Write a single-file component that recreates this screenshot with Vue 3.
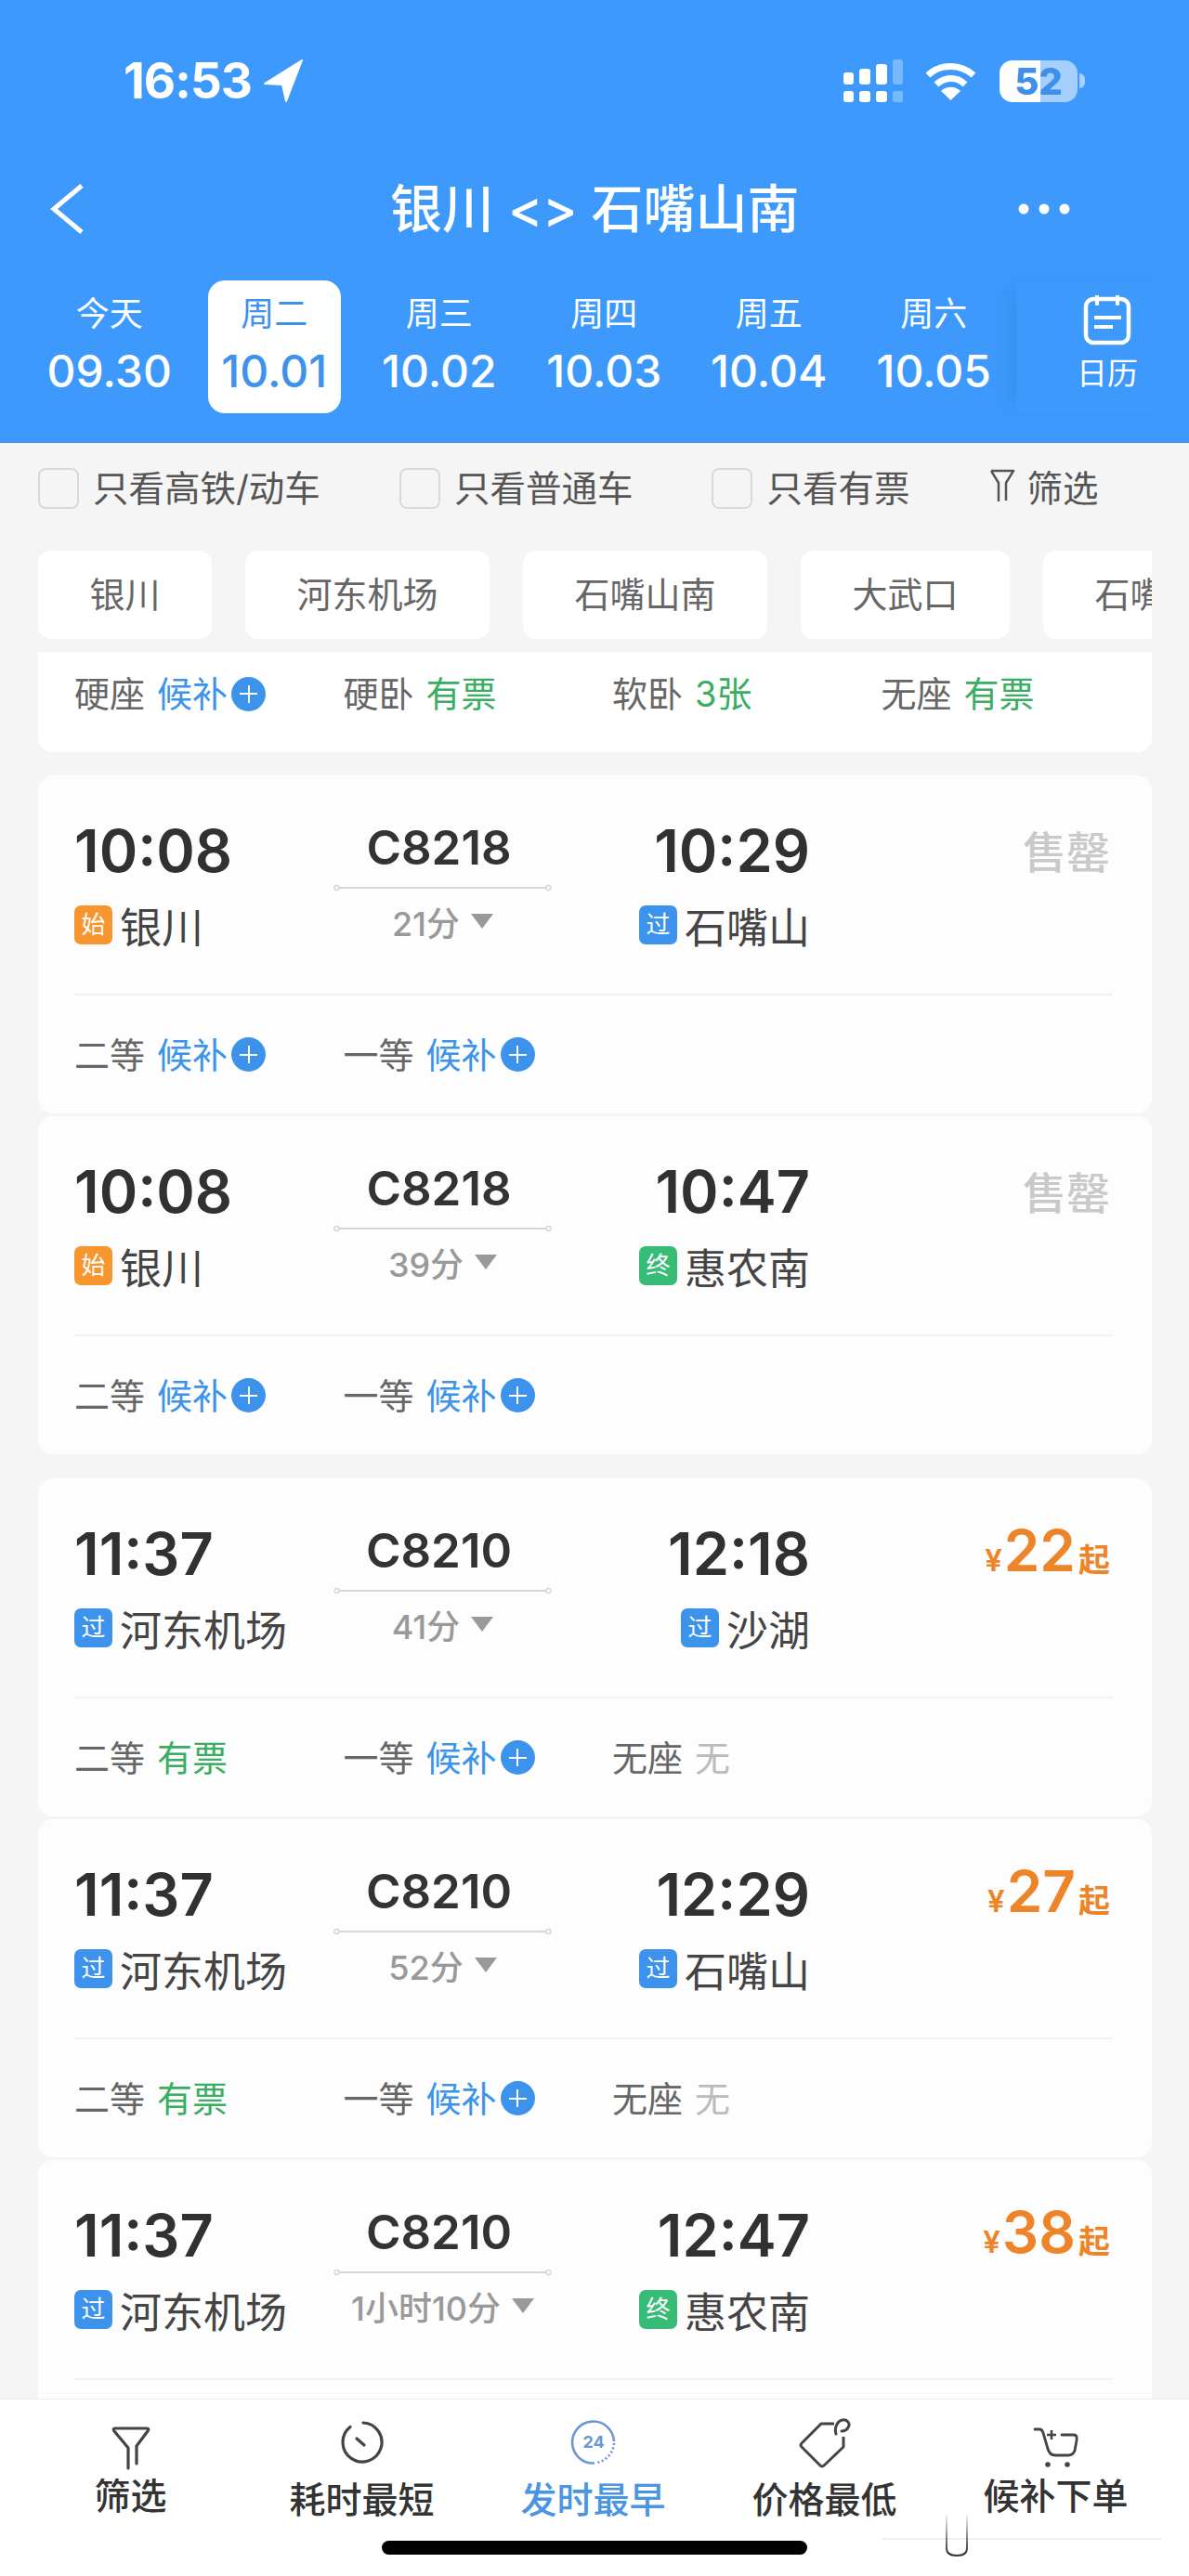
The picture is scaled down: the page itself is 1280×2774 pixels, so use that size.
<script setup>
const dates = [
  { week: '今天', date: '09.30' },
  { week: '周二', date: '10.01', active: true },
  { week: '周三', date: '10.02' },
  { week: '周四', date: '10.03' },
  { week: '周五', date: '10.04' },
  { week: '周六', date: '10.05' },
]

const stations = ['银川', '河东机场', '石嘴山南', '大武口', '石嘴山']

const filters = ['只看高铁/动车', '只看普通车', '只看有票']

const partialSeats = [
  { name: '硬座', state: '候补', type: 'wait' },
  { name: '硬卧', state: '有票', type: 'ok' },
  { name: '软卧', state: '3张', type: 'ok' },
  { name: '无座', state: '有票', type: 'ok' },
]

const seats8218 = [
  { name: '二等', state: '候补', type: 'wait' },
  { name: '一等', state: '候补', type: 'wait' },
]

const seats8210 = [
  { name: '二等', state: '有票', type: 'ok' },
  { name: '一等', state: '候补', type: 'wait' },
  { name: '无座', state: '无', type: 'none' },
]

// the last card runs under the bottom bar, its seat row is never visible
const groups = [
  [
    { from: '10:08', to: '10:29', no: 'C8218', dur: '21分', fromTag: '始', fromTagType: 'start', fromName: '银川', toTag: '过', toTagType: 'pass', toName: '石嘴山', seats: seats8218 },
    { from: '10:08', to: '10:47', no: 'C8218', dur: '39分', fromTag: '始', fromTagType: 'start', fromName: '银川', toTag: '终', toTagType: 'end', toName: '惠农南', seats: seats8218 },
  ],
  [
    { from: '11:37', to: '12:18', no: 'C8210', dur: '41分', fromTag: '过', fromTagType: 'pass', fromName: '河东机场', toTag: '过', toTagType: 'pass', toName: '沙湖', price: '22', seats: seats8210 },
    { from: '11:37', to: '12:29', no: 'C8210', dur: '52分', fromTag: '过', fromTagType: 'pass', fromName: '河东机场', toTag: '过', toTagType: 'pass', toName: '石嘴山', price: '27', seats: seats8210 },
    { from: '11:37', to: '12:47', no: 'C8210', dur: '1小时10分', fromTag: '过', fromTagType: 'pass', fromName: '河东机场', toTag: '终', toTagType: 'end', toName: '惠农南', price: '38', seats: [] },
  ],
]

const sorts = [
  { label: '筛选', icon: 'filter', high: true },
  { label: '耗时最短', icon: 'clock' },
  { label: '发时最早', icon: 'early', active: true },
  { label: '价格最低', icon: 'tag' },
  { label: '候补下单', icon: 'cart', high: true },
]
</script>

<template>
  <div class="page">
    <header class="head">
      <div class="status">
        <div class="clock">
          <span>16:53</span>
          <svg class="arrow" width="46" height="48" viewBox="0 0 46 48">
            <path d="M43 2 3 27l19 1 4 18z" fill="#fff" stroke="#fff" stroke-width="2" stroke-linejoin="round" />
          </svg>
        </div>
        <div class="status-right">
          <svg width="66" height="46" viewBox="0 0 66 46">
            <g fill="#fff">
              <rect x="0" y="14" width="11" height="13" rx="3" />
              <rect x="17" y="10" width="12" height="17" rx="3" />
              <rect x="35" y="5" width="12" height="22" rx="3" />
              <rect x="0" y="34" width="11" height="12" rx="3" />
              <rect x="17" y="34" width="12" height="12" rx="3" />
              <rect x="35" y="34" width="12" height="12" rx="3" />
            </g>
            <g fill="#fff" opacity="0.3">
              <rect x="53" y="0" width="11" height="27" rx="3" />
              <rect x="53" y="34" width="11" height="12" rx="2" />
            </g>
          </svg>
          <svg class="wifi" width="57" height="43" viewBox="0 0 57 43">
            <g fill="none" stroke="#fff" stroke-width="7">
              <path d="M4 15A36 36 0 0 1 53 15" />
              <path d="M13 25A22 22 0 0 1 44 25" />
            </g>
            <path d="M18 32A15 15 0 0 1 39 32L28.500 42z" fill="#fff" />
          </svg>
          <div class="battery">52</div>
          <div class="nub"></div>
        </div>
      </div>

      <div class="nav">
        <svg width="38" height="54" viewBox="0 0 38 54">
          <path d="M34 2 4 27l30 25" fill="none" stroke="#fff" stroke-width="5" />
        </svg>
        <div class="title">银川 &lt;&gt; 石嘴山南</div>
        <svg class="more" width="56" height="12" viewBox="0 0 56 12">
          <g fill="#fff">
            <circle cx="6" cy="6" r="5.500" />
            <circle cx="28" cy="6" r="5.500" />
            <circle cx="50" cy="6" r="5.500" />
          </g>
        </svg>
      </div>

      <div class="tabs">
        <div v-for="d in dates" :key="d.date" class="tab" :class="{ on: d.active }">
          <span class="week">{{ d.week }}</span>
          <span class="date">{{ d.date }}</span>
        </div>
        <div class="cal">
          <svg width="56" height="56" viewBox="0 0 56 56">
            <rect x="5" y="6" width="46" height="47" rx="8" fill="none" stroke="#fff" stroke-width="4.500" />
            <path d="M17 2v11M39 2v11" stroke="#fff" stroke-width="4" />
            <path d="M14 26h29M14 36h20" stroke="#fff" stroke-width="4" />
          </svg>
          <span>日历</span>
        </div>
      </div>
    </header>

    <main class="main">
      <div class="filters">
        <div v-for="f in filters" :key="f" class="check">
          <i class="box"></i>
          <span>{{ f }}</span>
        </div>
        <div class="check screen">
          <svg width="30" height="38" viewBox="0 0 30 38">
            <path d="M3 3h24L19 16v19M3 3l8 13v20" fill="none" stroke="#555" stroke-width="2.500" stroke-linejoin="round" />
          </svg>
          <span>筛选</span>
        </div>
      </div>

      <div class="chips">
        <div v-for="s in stations" :key="s" class="chip">{{ s }}</div>
      </div>

      <div class="partial">
        <div class="seats">
          <div v-for="s in partialSeats" :key="s.name" class="seat">
            <span class="seat-name">{{ s.name }}</span>
            <span class="seat-state" :class="s.type">{{ s.state }}</span>
            <i v-if="s.type === 'wait'" class="plus"></i>
          </div>
        </div>
      </div>

      <section v-for="(group, g) in groups" :key="g" class="group">
        <article v-for="(t, i) in group" :key="i" class="card">
          <div class="train">
            <div class="col-from">
              <div class="time">{{ t.from }}</div>
              <div class="stop">
                <i class="tag" :class="t.fromTagType">{{ t.fromTag }}</i>
                <span>{{ t.fromName }}</span>
              </div>
            </div>
            <div class="col-mid">
              <div class="no">{{ t.no }}</div>
              <svg class="line" width="235" height="8" viewBox="0 0 235 8">
                <path d="M6 4h223" stroke="#d4d6d8" stroke-width="2" />
                <circle cx="3.500" cy="4" r="2.500" fill="#fff" stroke="#d4d6d8" stroke-width="1.500" />
                <circle cx="231.500" cy="4" r="2.500" fill="#fff" stroke="#d4d6d8" stroke-width="1.500" />
              </svg>
              <div class="dur">
                <span>{{ t.dur }}</span>
                <i class="tri"></i>
              </div>
            </div>
            <div class="col-to">
              <div class="time">{{ t.to }}</div>
              <div class="stop">
                <i class="tag" :class="t.toTagType">{{ t.toTag }}</i>
                <span>{{ t.toName }}</span>
              </div>
            </div>
            <div class="col-price">
              <div v-if="t.price" class="price"><small>¥</small><b>{{ t.price }}</b><em>起</em></div>
              <div v-else class="sold">售罄</div>
            </div>
          </div>
          <div class="seats">
            <div v-for="s in t.seats" :key="s.name" class="seat">
              <span class="seat-name">{{ s.name }}</span>
              <span class="seat-state" :class="s.type">{{ s.state }}</span>
              <i v-if="s.type === 'wait'" class="plus"></i>
            </div>
          </div>
        </article>
      </section>
    </main>

    <footer class="bar">
      <div class="sorts">
        <div v-for="s in sorts" :key="s.label" class="sort" :class="{ on: s.active, high: s.high }">
          <div class="slot">
            <svg v-if="s.icon === 'filter'" width="42" height="48" viewBox="0 0 42 48">
              <path d="M4 3h34q3 0 1 3L27 22v19M4 3q-3 0-1 3l15 18v22" fill="none" stroke="#444" stroke-width="3.200" stroke-linecap="round" stroke-linejoin="round" />
            </svg>
            <svg v-if="s.icon === 'clock'" width="48" height="48" viewBox="0 0 48 48">
              <path d="M25 3A21 21 0 1 1 11 7.500" fill="none" stroke="#444" stroke-width="3.200" stroke-linecap="round" />
              <path d="M18 20l8 7" stroke="#444" stroke-width="3.200" stroke-linecap="round" />
            </svg>
            <svg v-if="s.icon === 'early'" width="50" height="50" viewBox="0 0 50 50">
              <path d="M47 24A22.500 22.500 0 1 0 26 47.500" fill="none" stroke="#6b97d4" stroke-width="2.600" />
              <path d="M47 26A22.500 22.500 0 0 1 28 47" fill="none" stroke="#6b97d4" stroke-width="2.600" stroke-dasharray="2 2.500" />
              <text x="25" y="31" text-anchor="middle" class="early-text">24</text>
            </svg>
            <svg v-if="s.icon === 'tag'" width="56" height="56" viewBox="0 0 56 56">
              <path d="M38 8H24L3 29q-2 2 0 4l20 20q2 2 4 0l21-20V22" fill="none" stroke="#444" stroke-width="3" stroke-linejoin="round" />
              <path d="M40 19c-2-6 1-14 7-15 5-1 9 4 6 8-1 2-4 4-7 4" fill="none" stroke="#444" stroke-width="3" stroke-linecap="round" />
            </svg>
            <svg v-if="s.icon === 'cart'" width="50" height="46" viewBox="0 0 50 46">
              <path d="M2 3h5q3 0 4 4l5 17q2 7 8 7h14q5 0 7-5l2-11q1-6-3-6H31" fill="none" stroke="#444" stroke-width="2.800" stroke-linecap="round" />
              <path d="M20 4v10M15 9h10" stroke="#444" stroke-width="2.600" />
              <circle cx="16" cy="41" r="2.800" fill="#444" />
              <circle cx="37" cy="41" r="2.800" fill="#444" />
            </svg>
          </div>
          <span class="sort-label">{{ s.label }}</span>
        </div>
      </div>
      <div class="home"></div>
      <svg class="smudge" width="300" height="50" viewBox="0 0 300 50">
        <defs>
          <linearGradient id="fade" x1="0" y1="0" x2="0" y2="1">
            <stop offset="0" stop-color="#222" stop-opacity="0.05" />
            <stop offset="1" stop-color="#222" stop-opacity="0.95" />
          </linearGradient>
        </defs>
        <path d="M0 27h300" stroke="#000" stroke-opacity="0.06" stroke-width="2" />
        <path d="M69 1v36q0 8 11 8t11-8V1" fill="none" stroke="url(#fade)" stroke-width="2" />
      </svg>
    </footer>
  </div>
</template>

<style scoped>
.page {
  width: 1280px;
  height: 2774px;
  display: flex;
  flex-direction: column;
  overflow: hidden;
  background: #f5f5f5;
  font-family: Inter, "Noto Sans CJK SC", sans-serif;
}

.head {
  height: 477px;
  flex: none;
  background: #3d99fb;
  color: #fff;
}

.status {
  height: 174px;
  display: flex;
  justify-content: space-between;
  align-items: center;
  padding: 0 112px 0 133px;
  box-sizing: border-box;
}

.clock {
  display: flex;
  align-items: center;
  gap: 11px;
  font-size: 53px;
  font-weight: 700;
  letter-spacing: -1px;
}

.status-right {
  display: flex;
  align-items: center;
}

.wifi {
  margin-left: 21px;
}

.battery {
  width: 84px;
  height: 45px;
  margin-left: 24px;
  border-radius: 14px;
  background: linear-gradient(90deg, #fff 52%, #a5cffc 52%);
  color: #3d8fe8;
  font-size: 40px;
  font-weight: 800;
  line-height: 45px;
  text-align: center;
}

.nub {
  width: 6px;
  height: 16px;
  margin-left: 2px;
  border-radius: 0 8px 8px 0;
  background: #a5cffc;
}

.nav {
  height: 102px;
  display: grid;
  grid-template-columns: 366px auto 1fr;
  align-items: center;
  padding: 0 128px 0 54px;
}

.title {
  font-size: 56px;
  font-weight: 500;
  line-height: 1;
}

.more {
  justify-self: end;
}

.tabs {
  display: flex;
  margin-top: 26px;
  padding-left: 29px;
}

.tab {
  flex: none;
  width: 177.500px;
  height: 143px;
  display: flex;
  flex-direction: column;
  align-items: center;
}

.tab.on {
  color: #3d93ec;
  position: relative;
  z-index: 0;
}

.tab.on::before {
  content: "";
  position: absolute;
  z-index: -1;
  top: 0;
  bottom: 0;
  left: 17px;
  width: 143px;
  border-radius: 18px;
  background: #fff;
}

.week {
  margin-top: 14px;
  font-size: 36px;
  line-height: 44px;
}

.date {
  margin-top: 12px;
  font-size: 48px;
  font-weight: 500;
  line-height: 56px;
}

.cal {
  flex: none;
  width: 186px;
  padding-left: 10px;
  box-sizing: border-box;
  display: flex;
  flex-direction: column;
  align-items: center;
  font-size: 33px;
  box-shadow: -16px 0 18px -10px rgba(30, 100, 190, 0.18);
}

.cal svg {
  margin-top: 14px;
}

.cal span {
  line-height: 44px;
  margin-top: 8px;
}

.main {
  flex: 1;
  min-height: 0;
  overflow: hidden;
}

.filters {
  height: 116px;
  display: flex;
  padding: 27px 0 0 41px;
  box-sizing: border-box;
  gap: 85px;
  color: #555;
  font-size: 38.500px;
}

.check {
  display: flex;
  align-items: flex-start;
  gap: 15px;
  line-height: 44px;
}

.box {
  width: 44px;
  height: 44px;
  box-sizing: border-box;
  border: 2px solid #d9d9d9;
  border-radius: 8px;
}

.screen {
  gap: 11px;
}

.chips {
  display: flex;
  gap: 36px;
  height: 95px;
  margin: 0 40px 0 41px;
  overflow: hidden;
}

.chip {
  flex: none;
  padding: 0 55.500px;
  border-radius: 14px;
  background: #fff;
  color: #666;
  font-size: 38px;
  line-height: 95px;
}

.partial {
  height: 108px;
  margin: 14px 40px 25px 41px;
  border-radius: 0 0 16px 16px;
  background: #fff;
}

.partial .seats {
  height: 90px;
  padding-left: 39px;
}

.seats {
  display: flex;
  align-items: center;
  height: 127px;
}

.seat {
  width: 289.500px;
  display: flex;
  align-items: center;
  font-size: 38px;
  line-height: 44px;
}

.seat-name {
  color: #666;
}

.seat-state {
  margin-left: 13px;
}

.wait {
  color: #3b93ec;
}

.ok {
  color: #39ae63;
}

.none {
  color: #bbb;
}

.plus {
  position: relative;
  width: 37px;
  height: 37px;
  margin-left: 4px;
  border-radius: 50%;
  background: #3d93ec;
}

.plus::before,
.plus::after {
  content: "";
  position: absolute;
  background: #fff;
}

.plus::before {
  left: 9px;
  right: 9px;
  top: 17.500px;
  height: 2px;
}

.plus::after {
  top: 9px;
  bottom: 9px;
  left: 17.500px;
  width: 2px;
}

.group {
  margin-bottom: 26px;
}

.card {
  height: 364px;
  margin: 0 40px 3px 41px;
  padding: 0 42px 0 39px;
  box-sizing: border-box;
  border-radius: 16px;
  background: #fdfdfe;
}

.train {
  height: 237px;
  display: flex;
  box-sizing: border-box;
  border-bottom: 2px solid #f2f2f3;
}

.col-from,
.col-to {
  width: 279px;
  padding-top: 45px;
  box-sizing: border-box;
}

.col-to {
  width: 278px;
  display: flex;
  flex-direction: column;
  align-items: flex-end;
}

.time {
  color: #2f3133;
  font-size: 63px;
  font-weight: 600;
  line-height: 72px;
}

.stop {
  display: flex;
  align-items: center;
  height: 50px;
  margin-top: 19px;
  color: #444;
  font-size: 45px;
}

.tag {
  width: 41px;
  height: 42px;
  margin-right: 8px;
  border-radius: 7px;
  color: #fff;
  font-size: 26px;
  font-style: normal;
  line-height: 42px;
  text-align: center;
}

.start {
  background: #f7962f;
}

.pass {
  background: #3d93ec;
}

.end {
  background: #36bc77;
}

.col-mid {
  width: 235px;
  padding-top: 48px;
  box-sizing: border-box;
  display: flex;
  flex-direction: column;
  align-items: center;
}

.no {
  margin-right: 8px;
  color: #333;
  font-size: 51px;
  font-weight: 600;
  line-height: 60px;
}

.line {
  margin-top: 9px;
}

.dur {
  display: flex;
  align-items: center;
  gap: 12px;
  height: 44px;
  margin-top: 10px;
  color: #999;
  font-size: 36px;
  font-weight: 500;
}

.tri {
  width: 0;
  height: 0;
  border-left: 12px solid transparent;
  border-right: 12px solid transparent;
  border-top: 16px solid #999;
}

.col-price {
  flex: 1;
  padding-right: 3px;
  text-align: right;
}

.sold {
  margin-top: 53px;
  color: #c9c9c9;
  font-size: 47px;
  font-weight: 500;
  line-height: 60px;
}

.price {
  margin-top: 40px;
  color: #ee8428;
  line-height: 76px;
  white-space: nowrap;
}

.price small {
  font-size: 33px;
  font-weight: 600;
  margin-right: 2px;
}

.price b {
  font-size: 62px;
  font-weight: 600;
}

.price em {
  font-size: 34px;
  font-style: normal;
  font-weight: 700;
  margin-left: 3px;
}

.bar {
  position: relative;
  flex: none;
  height: 191px;
  box-sizing: border-box;
  padding-top: 17px;
  border-top: 1px solid #eee;
  background: #fff;
}

.sorts {
  display: grid;
  grid-template-columns: repeat(5, 249px);
  padding-left: 16px;
}

.sort {
  display: flex;
  flex-direction: column;
  align-items: center;
  color: #333;
}

.sort.on {
  color: #4a94e4;
}

.slot {
  height: 64px;
  box-sizing: border-box;
  padding-bottom: 6px;
  display: flex;
  align-items: center;
}

.high .slot {
  padding: 6px 0 0;
}

.sort-label {
  margin-top: 7px;
  font-size: 39px;
  font-weight: 500;
  line-height: 40px;
}

.high .sort-label {
  margin-top: 3px;
}

.early-text {
  fill: #6b97d4;
  font-size: 18px;
  font-weight: 700;
}

.home {
  width: 458px;
  height: 15px;
  margin: 24px auto 0;
  border-radius: 8px;
  background: #000;
}

.smudge {
  position: absolute;
  right: 30px;
  top: 123px;
}
</style>

<style>
body {
  margin: 0;
}
</style>
